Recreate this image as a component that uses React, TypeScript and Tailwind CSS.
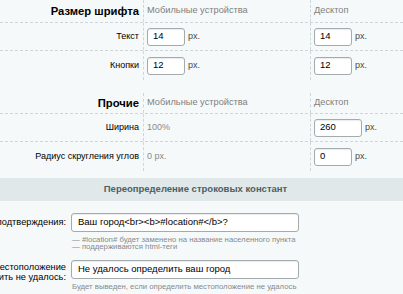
import React from 'react';

const font = { fontFamily: '"Liberation Sans", Arial, sans-serif' };

const SizeInput = ({ value, wide }: { value: string; wide?: boolean }) => (
  <div className="flex items-center">
    <div
      className={
        'flex h-[18px] items-center rounded-[3px] border border-[#a4abae] bg-white pl-[5px] text-[9.5px] text-black shadow-[inset_0_1px_1px_rgba(0,0,0,0.08)] ' +
        (wide ? 'w-[48px]' : 'w-[38px]')
      }
    >
      {value}
    </div>
    <span className="ml-[3px] text-[9px] text-[#4a4a4a]">px.</span>
  </div>
);

const HeadRow = ({ title, h }: { title: string; h: string }) => (
  <div className={'flex border-b border-dashed border-[#cfd6d8] ' + h}>
    <div className="flex w-[144px] shrink-0 items-center justify-end border-r border-dashed border-[#cfd6d8] pr-[4px] text-[11.25px] font-bold whitespace-nowrap text-black">
      {title}
    </div>
    <div className="flex w-[167px] shrink-0 items-center border-r border-dashed border-[#cfd6d8] pl-[3px] text-[9.25px] text-[#808080]">
      Мобильные устройства
    </div>
    <div className="flex flex-1 items-center pl-[3px] text-[9.25px] text-[#808080]">Десктоп</div>
  </div>
);

const Row = ({
  label,
  mobile,
  desktop,
  last,
}: {
  label: string;
  mobile: React.ReactNode;
  desktop: React.ReactNode;
  last?: boolean;
}) => (
  <div className={'flex h-[28px] ' + (last ? 'h-[29px]' : 'border-b border-dashed border-[#cfd6d8]')}>
    <div className="flex w-[144px] shrink-0 items-center justify-end border-r border-dashed border-[#cfd6d8] pr-[4px] text-[9px] whitespace-nowrap text-black">
      {label}
    </div>
    <div className="flex w-[167px] shrink-0 items-center border-r border-dashed border-[#cfd6d8] pl-[3px]">{mobile}</div>
    <div className="flex flex-1 items-center pl-[3px]">{desktop}</div>
  </div>
);

const Gray = ({ children }: { children: React.ReactNode }) => (
  <span className="text-[9px] text-[#8a8a8a]">{children}</span>
);

const TextField = ({ value }: { value: string }) => (
  <div className="flex h-[19px] w-[228px] items-center rounded-[3px] border border-[#a4abae] bg-white pl-[6px] text-[9.5px] whitespace-nowrap text-black shadow-[inset_0_1px_1px_rgba(0,0,0,0.08)]">
    {value}
  </div>
);

export default function App() {
  return (
    <div className="h-[294px] w-[403px] overflow-hidden bg-[#f5f9f9]" style={font}>
      <HeadRow title="Размер шрифта" h="h-[23px]" />
      <Row label="Текст" mobile={<SizeInput value="14" />} desktop={<SizeInput value="14" />} />
      <Row label="Кнопки" mobile={<SizeInput value="12" />} desktop={<SizeInput value="12" />} last />

      <div className="h-[13px]" />

      <HeadRow title="Прочие" h="h-[21px]" />
      <Row label="Ширина" mobile={<Gray>100%</Gray>} desktop={<SizeInput value="260" wide />} />
      <Row label="Радиус скругления углов" mobile={<Gray>0 px.</Gray>} desktop={<SizeInput value="0" />} last />

      <div className="mt-[7px] flex h-[23px] items-center justify-center bg-[#e0e8ea] pr-[12px] text-[9.5px] font-bold text-[#4c5f64]">
        Переопределение строковых констант
      </div>

      <div className="mt-[12px] flex">
        <div className="flex h-[19px] w-[66px] shrink-0 items-center justify-end text-[9.25px] whitespace-nowrap text-black">
          Текст подтверждения:
        </div>
        <div className="ml-[5px] flex flex-col">
          <TextField value="Ваш город<br><b>#location#</b>?" />
          <div className="mt-[4px] pl-[1px] text-[7.75px] leading-[7px] text-[#8a8a8a]">
            <div>— #location# будет заменено на название населенного пункта</div>
            <div>— поддерживаются html-теги</div>
          </div>
        </div>
      </div>

      <div className="mt-[10px] flex">
        <div className="flex w-[66px] shrink-0 flex-col items-end pt-[3px] text-[9.25px] leading-[9.5px] whitespace-nowrap text-black">
          <span>Текст, если местоположение</span>
          <span>определить не удалось:</span>
        </div>
        <div className="ml-[5px] flex flex-col">
          <TextField value="Не удалось определить ваш город" />
          <div className="mt-[4px] pl-[1px] text-[7.75px] leading-[7px] text-[#8a8a8a]">
            Будет выведен, если определить местоположение не удалось
          </div>
        </div>
      </div>
    </div>
  );
}
